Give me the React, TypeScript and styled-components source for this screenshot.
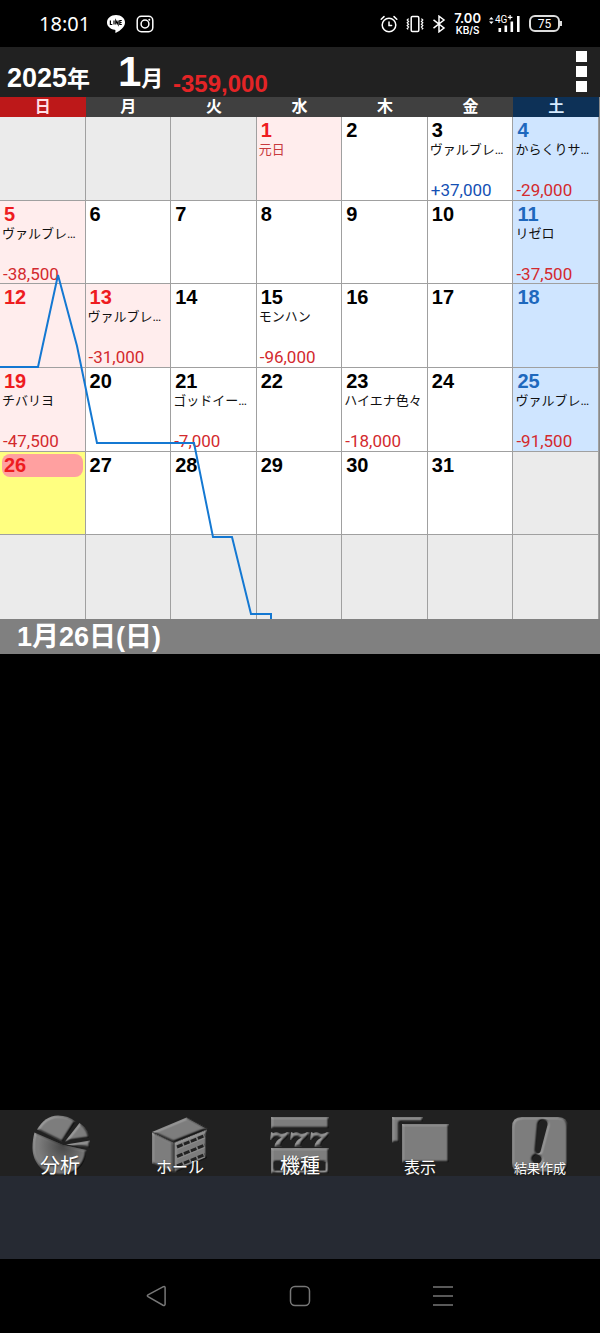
import React, { useState } from "react";
import styled, { createGlobalStyle } from "styled-components";

type DayKind = "normal" | "holiday" | "saturday" | "today" | "out";

interface Day {
  date?: number;
  kind: DayKind;
  label?: string;
  amount?: string;
}

const weekNames = ["日", "月", "火", "水", "木", "金", "土"];

const memos: Record<number, { label?: string; amount?: string }> = {
  1: { label: "元日" },
  3: { label: "ヴァルブレ…", amount: "+37,000" },
  4: { label: "からくりサ…", amount: "-29,000" },
  5: { label: "ヴァルブレ…", amount: "-38,500" },
  11: { label: "リゼロ", amount: "-37,500" },
  13: { label: "ヴァルブレ…", amount: "-31,000" },
  15: { label: "モンハン", amount: "-96,000" },
  19: { label: "チバリヨ", amount: "-47,500" },
  21: { label: "ゴッドイー…", amount: "-7,000" },
  23: { label: "ハイエナ色々", amount: "-18,000" },
  25: { label: "ヴァルブレ…", amount: "-91,500" },
};

const holidays = [1, 13];
const today = 26;
const firstWeekday = 3;
const lastDate = 31;

const getDay = (index: number): Day => {
  const date = index - firstWeekday + 1;
  if (date < 1 || date > lastDate) return { kind: "out" };
  let kind: DayKind = "normal";
  if (index % 7 === 6) kind = "saturday";
  if (index % 7 === 0 || holidays.includes(date)) kind = "holiday";
  if (date === today) kind = "today";
  return { date, kind, ...memos[date] };
};

const weeks = [0, 1, 2, 3, 4, 5].map((w) =>
  weekNames.map((_, d) => getDay(w * 7 + d))
);

const App = () => {
  const [selected, setSelected] = useState(today);
  return (
    <Page>
      <GlobalStyle />
      {/* status bar */}
      <StatusBar>
        <StatusGroup>
          <Clock>18:01</Clock>
          <LineIcon />
          <InstagramIcon />
        </StatusGroup>
        <StatusGroup $tight>
          <AlarmIcon />
          <VibrateIcon />
          <BluetoothIcon />
          <Speed>
            <b>7.00</b>
            <span>KB/S</span>
          </Speed>
          <Signal>
            <span>4G</span>
            <SignalIcon />
          </Signal>
          <Battery>75</Battery>
        </StatusGroup>
      </StatusBar>

      {/* month header */}
      <MonthHeader>
        <Year>
          2025<span>年</span>
        </Year>
        <Month>
          <strong>1</strong>月
        </Month>
        <Total>-359,000</Total>
        <MenuButton aria-label="メニュー">
          <i />
          <i />
          <i />
        </MenuButton>
      </MonthHeader>

      {/* calendar */}
      <CalendarWrap>
        <Calendar>
          <thead>
            <tr>
              {weekNames.map((name, i) => (
                <WeekHead key={name} $index={i}>
                  {name}
                </WeekHead>
              ))}
            </tr>
          </thead>
          <tbody>
            {weeks.map((week, w) => (
              <tr key={w}>
                {week.map((day, d) => (
                  <DayCell
                    key={d}
                    $kind={day.kind}
                    onClick={() => day.date && setSelected(day.date)}
                  >
                    {day.date && (
                      <DayInner>
                        <DayNumber $kind={day.kind} $weekday={d}>
                          {day.date}
                        </DayNumber>
                        <DayLabel $holiday={day.date === 1}>
                          {day.label}
                        </DayLabel>
                        {day.amount && (
                          <Amount $plus={day.amount[0] === "+"}>
                            {day.amount}
                          </Amount>
                        )}
                      </DayInner>
                    )}
                  </DayCell>
                ))}
              </tr>
            ))}
          </tbody>
        </Calendar>
        <Chart viewBox="0 0 600 502" preserveAspectRatio="none">
          <polyline points="0,250 38,250 58,158 77,229 97,326 194,326 213,420 232,420 251,497 271,497 271,502" />
        </Chart>
      </CalendarWrap>

      {/* selected day */}
      <DetailTitle>
        1月{selected}日({weekNames[(selected + firstWeekday - 1) % 7]})
      </DetailTitle>
      <Detail />

      {/* bottom toolbar */}
      <Toolbar>
        <ToolButton>
          <PieIcon />
          <ToolText $size={20}>分析</ToolText>
        </ToolButton>
        <ToolButton>
          <HallIcon />
          <ToolText $size={16}>ホール</ToolText>
        </ToolButton>
        <ToolButton>
          <SlotIcon />
          <ToolText $size={20}>機種</ToolText>
        </ToolButton>
        <ToolButton>
          <WindowsIcon />
          <ToolText $size={16}>表示</ToolText>
        </ToolButton>
        <ToolButton>
          <ResultIcon />
          <ToolText $size={13}>結果作成</ToolText>
        </ToolButton>
      </Toolbar>
      <AdArea />

      {/* system navigation */}
      <NavBar>
        <NavButton aria-label="戻る">
          <svg width="22" height="22" viewBox="0 0 22 22">
            <path d="M17.400 1.700 2 9.800q-1.300.9 0 1.800L17 20.200q2 .7 2.100-1V2.700q-.1-1.600-1.700-1z" />
          </svg>
        </NavButton>
        <NavButton aria-label="ホーム画面">
          <svg width="22" height="22" viewBox="0 0 22 22">
            <rect x="1.500" y="1.500" width="19" height="19" rx="4.500" />
          </svg>
        </NavButton>
        <NavButton aria-label="履歴">
          <svg width="22" height="22" viewBox="0 0 22 22">
            <path d="M1 2h20M1 11h20M1 20h20" />
          </svg>
        </NavButton>
      </NavBar>
    </Page>
  );
};

/* status icons */
const LineIcon = () => (
  <svg width="20" height="20" viewBox="0 0 20 20">
    <path
      d="M10 1C4.800 1 1 4.400 1 8.500c0 3.800 3.300 6.700 7.700 7.300 1 .2.8.9.6 2.400-.1.700.4.800 1.100.400C14 16.700 19 13.200 19 8.500 19 4.400 15.200 1 10 1z"
      fill="#fff"
    />
    <path
      d="M4.400 6.500v4h1.900M8 6.500v4M9.800 10.500v-4l2.300 4v-4M15.800 6.500h-2v4h2M13.800 8.500h1.800"
      fill="none"
      stroke="#000"
      strokeWidth="1.200"
    />
  </svg>
);

const InstagramIcon = () => (
  <svg width="18" height="18" viewBox="0 0 18 18" fill="none" stroke="#fff">
    <rect x="1.200" y="1.200" width="15.600" height="15.600" rx="4.200" strokeWidth="1.500" />
    <circle cx="9" cy="9" r="3.900" strokeWidth="1.500" />
    <circle cx="13.300" cy="4.700" r="1" fill="#fff" stroke="none" />
  </svg>
);

const AlarmIcon = () => (
  <svg width="18" height="18" viewBox="0 0 18 18" fill="none" stroke="#fff" strokeLinecap="round">
    <circle cx="9" cy="10" r="6.800" strokeWidth="1.500" />
    <path d="M9 7V10.600h2.600M1.200 4.200 4 1.600M16.800 4.200l-2.800-2.600" strokeWidth="1.500" />
  </svg>
);

const VibrateIcon = () => (
  <svg width="18" height="18" viewBox="0 0 18 18" fill="none" stroke="#fff">
    <rect x="5.200" y="1.600" width="7.600" height="14.800" rx="1.200" strokeWidth="1.500" />
    <path
      d="M2.600 3.600 1.200 5l1.400 1.400L1.200 7.800l1.400 1.400-1.400 1.400L2.600 12l-1.400 1.400 1 1M15.400 3.600 16.800 5l-1.400 1.400 1.400 1.400-1.400 1.400 1.400 1.400-1.400 1.400 1.400 1.400-1 1"
      strokeWidth="1.200"
    />
  </svg>
);

const BluetoothIcon = () => (
  <svg width="14" height="18" viewBox="0 0 14 18" fill="none" stroke="#fff">
    <path d="M1.500 4.800 12 13 7 16.800V1.200L12 5 1.500 13.200" strokeWidth="1.500" />
  </svg>
);

const SignalIcon = () => (
  <svg width="32" height="18" viewBox="0 0 32 18" fill="#fff">
    <path d="M0 4.500 2.300 2l2.300 2.500zM0 6.500 2.300 9l2.300-2.500z" />
    <path d="M9.500 13h2.600v4H9.500zM15.500 10.500h2.600V17h-2.600zM21.500 6.500h2.600V17h-2.600zM28 1h2.600v16H28z" />
    <path d="M20.500 0h1.200v1.700h1.700v1.200h-1.700v1.700h-1.200V2.900h-1.700V1.700h1.700z" />
  </svg>
);

/* toolbar icons: every shape is lit from the upper left */
const PieIcon = () => (
  <ToolIcon viewBox="0 0 60 62">
    <defs>
      <filter id="bevel" x="-5%" y="-5%" width="110%" height="110%" colorInterpolationFilters="sRGB">
        <feGaussianBlur in="SourceAlpha" stdDeviation="0.900" result="soft" />
        <feDiffuseLighting in="soft" surfaceScale="2" diffuseConstant="1" lightingColor="#989898" result="lit">
          <feDistantLight azimuth="225" elevation="55" />
        </feDiffuseLighting>
        <feComposite in="lit" in2="SourceAlpha" operator="in" />
      </filter>
      <radialGradient id="pieShade" gradientUnits="userSpaceOnUse" cx="33" cy="32" r="25">
        <stop offset="0" stopColor="#222" stopOpacity="0.600" />
        <stop offset="1" stopColor="#222" stopOpacity="0" />
      </radialGradient>
    </defs>
    <g filter="url(#bevel)">
      <path d="M4.500 18.500 33 31l23.500 5C56.500 51 45 61.500 30.500 61.500 14 61.500 2.500 49 2.500 34c0-6 .7-11 2-15.500z" />
      <path d="M7 15.500C12 7 19 1.500 28 1.500c7 0 13 2 17.500 6L32.500 28z" />
      <path d="M35 27.500 49.500 9c5.500 3.500 9 8.500 10 15z" />
      <path d="M36 30.500 60 26.500V34z" />
    </g>
    <path d="M4.500 18.500 33 31l23.500 5C56.500 51 45 61.500 30.500 61.500 14 61.500 2.500 49 2.500 34c0-6 .7-11 2-15.500z" fill="url(#pieShade)" />
  </ToolIcon>
);

const HallIcon = () => (
  <ToolIcon viewBox="0 0 60 62">
    <g filter="url(#bevel)">
      <path d="M2 18 23.500 28.500V59L2 49.500z" />
      <path d="M24.500 28.500 57 15.500V44L24.500 59z" />
    </g>
    <g filter="url(#bevel)">
      <path d="M2 18 36.500 3.500 57 15 24 28z" />
    </g>
    <path d="M2.500 18.500 24 28.500 57 15.500V14L37 3.500" fill="none" stroke="#333" strokeDasharray="1 1.500" />
    <path d="M27 33 55 21.500M27 42.500 55 31M27 52 55 40.500" stroke="#222" strokeWidth="3" strokeDasharray="6 1.500" />
    <path d="M27 35.500 55 24M27 45 55 33.500M27 54.500 55 43" stroke="#8c8c8c" />
  </ToolIcon>
);

const SlotIcon = () => (
  <ToolIcon viewBox="0 0 60 62">
    <g filter="url(#bevel)">
      <path d="M1 3h58v11.500H1z" />
      <path
        fillRule="evenodd"
        d="M1 34h58v25.500H1zM4.500 48v8.500h8V48zM17 48v8.500h26V48zM47.500 48v8.500h8V48z"
      />
      {[0, 20, 40].map((x) => (
        <path
          key={x}
          d={`M${x + 1} 18l2.500 1q3-1.500 6.500.5 4 1 7-1.500l2.500.5q-.5 4-4.500 7-4 3-3.500 7H${x + 4.500}q.5-6 7-9-4-1-6.500 0-1.500 1-2.500 2.500H${x}z`}
        />
      ))}
    </g>
  </ToolIcon>
);

const WindowsIcon = () => (
  <ToolIcon viewBox="0 0 60 62">
    <g filter="url(#bevel)">
      <path d="M2 3h31v5H9.500v20.500H2z" />
      <path d="M12 10h47v38.500H12z" />
    </g>
  </ToolIcon>
);

const ResultIcon = () => (
  <ToolIcon viewBox="0 0 60 62">
    <g filter="url(#bevel)">
      <path
        fillRule="evenodd"
        d="M12 3h36q10 0 10 10v36q0 10-10 10H12Q2 59 2 49V13Q2 3 12 3zM28.500 10 26 37q0 2.500 2 2.500 1.500 0 2.500-2L37.500 11q.5-4.500-4-5-4 0-5 4zM27 40.800a4.500 4.500 0 1 0 .1 0z"
      />
    </g>
  </ToolIcon>
);

const GlobalStyle = createGlobalStyle`
  * {
    box-sizing: border-box;
  }

  body {
    margin: 0;
    background-color: #000;
    font-family: "Liberation Sans", "Noto Sans CJK JP", sans-serif;
  }

  button {
    padding: 0;
    border: 0;
    background: none;
    font-family: inherit;
    cursor: pointer;
  }
`;

const Page = styled.div`
  display: flex;
  flex-direction: column;
  min-height: 100vh;
  background-color: #000;
  color: #fff;
`;

const StatusBar = styled.header`
  display: flex;
  align-items: center;
  justify-content: space-between;
  height: 47px;
  padding: 0 40px 0 39px;
`;

const StatusGroup = styled.div<{ $tight?: boolean }>`
  display: flex;
  align-items: center;
  gap: ${({ $tight }) => ($tight ? "8px" : "10px")};
`;

const Clock = styled.span`
  margin-right: 6px;
  font-family: "Noto Sans", sans-serif;
  font-size: 20px;
  line-height: 24px;
`;

const Speed = styled.div`
  display: flex;
  flex-direction: column;
  align-items: center;
  font-family: Inter, sans-serif;
  font-weight: 600;

  b {
    font-size: 13px;
    font-weight: 600;
    line-height: 13px;
  }

  span {
    font-size: 10px;
    line-height: 11px;
  }
`;

const Signal = styled.div`
  position: relative;
  display: flex;

  span {
    position: absolute;
    top: 0;
    left: 6px;
    font-family: Roboto, sans-serif;
    font-size: 10px;
    line-height: 10px;
  }
`;

const Battery = styled.div`
  position: relative;
  width: 31px;
  height: 17px;
  border: 2px solid #ddd;
  border-radius: 6px;
  font-family: Roboto, sans-serif;
  font-size: 12px;
  line-height: 14px;
  text-align: center;

  &::after {
    content: "";
    position: absolute;
    top: 4px;
    right: -4px;
    width: 2px;
    height: 5px;
    background-color: #ddd;
  }
`;

const MonthHeader = styled.div`
  display: flex;
  align-items: flex-end;
  height: 50px;
  padding: 0 13px 0 7px;
  background-color: #212121;
  font-weight: 700;
`;

const Year = styled.div`
  width: 111px;
  font-size: 27px;
  line-height: 36px;

  span {
    font-size: 23px;
  }
`;

const Month = styled.div`
  width: 55px;
  font-size: 22px;
  line-height: 36px;

  strong {
    font-size: 42px;
    line-height: 36px;
  }
`;

const Total = styled.div`
  color: #e42426;
  font-size: 24px;
  line-height: 26px;
`;

const MenuButton = styled.button`
  display: flex;
  flex-direction: column;
  gap: 4px;
  margin-left: auto;
  margin-bottom: 5px;

  i {
    width: 11px;
    height: 11px;
    background-color: #fff;
  }
`;

const CalendarWrap = styled.div`
  position: relative;
  padding-right: 1px;
  background-color: #8a8a8a;
`;

const Calendar = styled.table`
  width: 100%;
  height: 522px;
  table-layout: fixed;
  border-collapse: separate;
  border-spacing: 0;

  thead {
    height: 20px;
  }
`;

const WeekHead = styled.th<{ $index: number }>`
  height: 20px;
  padding: 0;
  background-color: ${({ $index }) =>
    $index === 0 ? "#bd1819" : $index === 6 ? "#0d3157" : "#404040"};
  color: ${({ $index }) =>
    $index === 0 ? "#ffdfe4" : $index === 6 ? "#d6ebff" : "#fff"};
  font-size: 16px;
  line-height: 20px;
`;

const cellColors: Record<DayKind, string> = {
  normal: "#fff",
  holiday: "#ffeded",
  saturday: "#cfe5ff",
  today: "#ffff80",
  out: "#ebebeb",
};

const DayCell = styled.td<{ $kind: DayKind }>`
  height: 83px;
  padding: 0;
  border-right: 1px solid #a0a0a0;
  border-bottom: 1px solid #a0a0a0;
  background-color: ${({ $kind }) => cellColors[$kind]};
  vertical-align: top;

  tr:last-child > & {
    border-bottom: 0;
  }
`;

const DayInner = styled.div`
  display: flex;
  flex-direction: column;
  height: 82px;
  padding: 2px 2px 0;
`;

const DayNumber = styled.div<{ $kind: DayKind; $weekday: number }>`
  height: 23px;
  padding-left: 2px;
  border-radius: 8px;
  background-color: ${({ $kind }) =>
    $kind === "today" ? "#ffa0a0" : "transparent"};
  color: ${({ $kind, $weekday }) =>
    $weekday === 6
      ? "#1e68bd"
      : $kind === "holiday" || $kind === "today"
        ? "#ee1c1f"
        : "#000"};
  font-size: 20px;
  font-weight: 700;
  line-height: 23px;
`;

const DayLabel = styled.div<{ $holiday: boolean }>`
  color: ${({ $holiday }) => ($holiday ? "#c8393c" : "#111")};
  font-family: Roboto, "Noto Sans CJK JP", sans-serif;
  font-size: 13px;
  line-height: 16px;
  white-space: nowrap;
`;

const Amount = styled.div<{ $plus: boolean }>`
  margin-top: auto;
  padding-left: 1px;
  color: ${({ $plus }) => ($plus ? "#1450b4" : "#d32a2e")};
  font-family: Roboto, sans-serif;
  font-size: 17px;
  line-height: 18px;
`;

const Chart = styled.svg`
  position: absolute;
  top: 20px;
  left: 0;
  width: 100%;
  height: 502px;
  pointer-events: none;

  polyline {
    fill: none;
    stroke: #1478d2;
    stroke-width: 2;
  }
`;

const DetailTitle = styled.h2`
  height: 35px;
  margin: 0;
  padding-left: 17px;
  background-color: #808080;
  font-size: 27px;
  line-height: 36px;
`;

const Detail = styled.main`
  flex: 1;
`;

const Toolbar = styled.nav`
  display: grid;
  grid-template-columns: repeat(5, 1fr);
  height: 66px;
  background-color: #212121;
`;

const ToolButton = styled.button`
  position: relative;
  color: #fff;
  font-family: "Noto Sans CJK JP", sans-serif;
`;

const ToolIcon = styled.svg`
  display: block;
  width: 60px;
  height: 62px;
  margin: 3px auto 0;
`;

const ToolText = styled.span<{ $size: number }>`
  position: absolute;
  right: 0;
  bottom: 0;
  left: 0;
  font-size: ${({ $size }) => $size}px;
  line-height: ${({ $size }) => $size + 3}px;
  text-shadow: 0 1px 2px #222;
`;

const AdArea = styled.div`
  height: 83px;
  background-color: #262a33;
`;

const NavBar = styled.footer`
  display: flex;
  justify-content: center;
  align-items: center;
  gap: 121px;
  height: 74px;
`;

const NavButton = styled.button`
  display: flex;

  svg {
    fill: none;
    stroke: #777;
    stroke-width: 1.500;
  }
`;

export default App;
